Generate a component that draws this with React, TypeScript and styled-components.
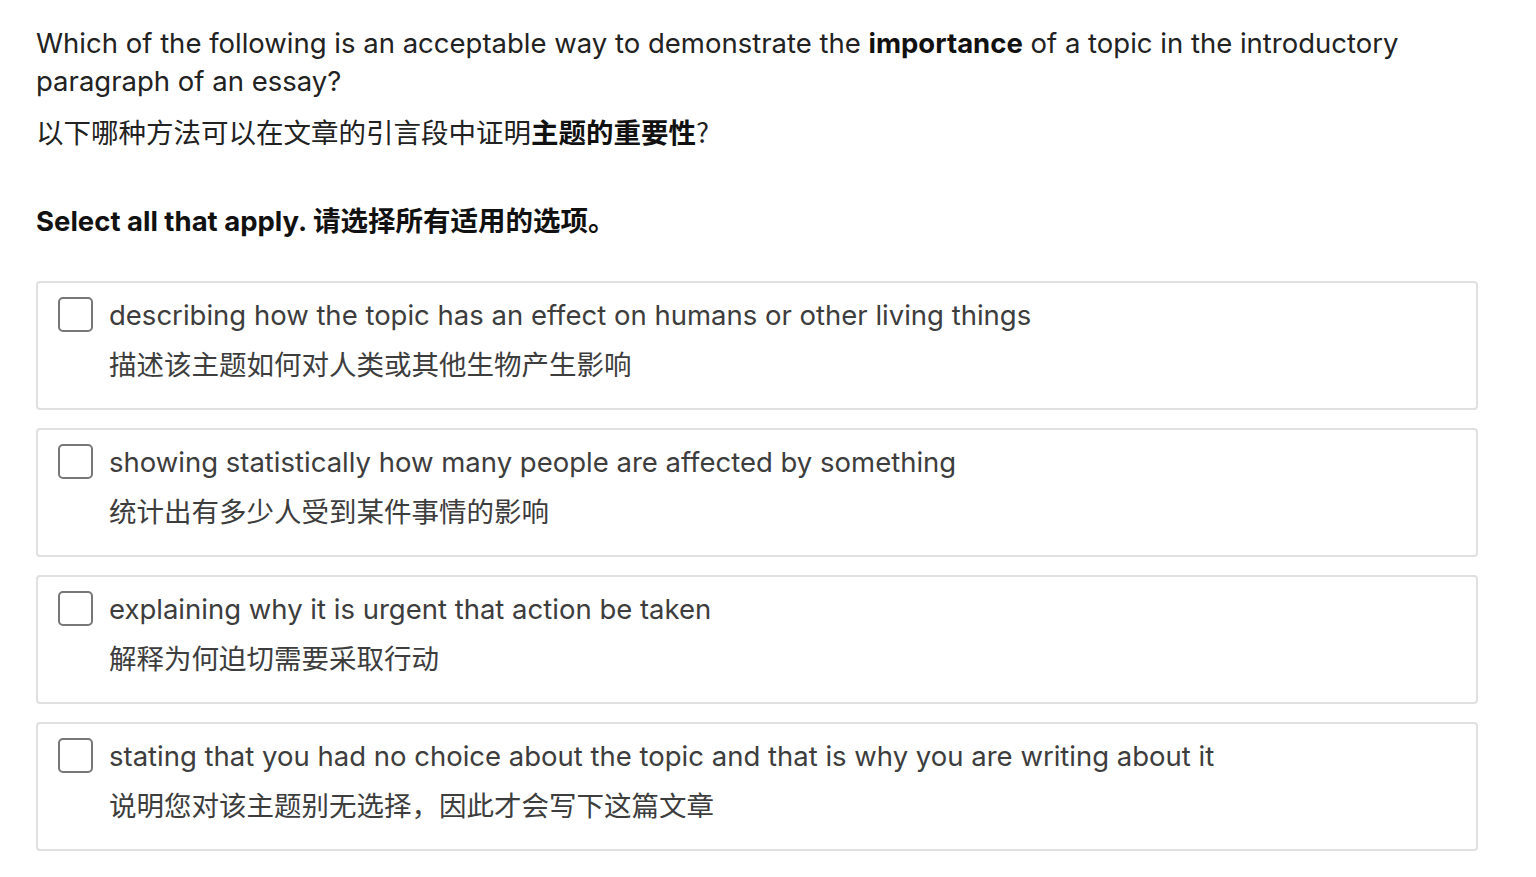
import React from 'react';
import styled, {createGlobalStyle} from 'styled-components';

const GlobalStyle = createGlobalStyle`
    body {
        margin: 0;
        background: #fff;
        font-family: Inter, "Noto Sans CJK SC", sans-serif;
    }
`;

const options = [
    {en: 'describing how the topic has an effect on humans or other living things', zh: '描述该主题如何对人类或其他生物产生影响'},
    {en: 'showing statistically how many people are affected by something', zh: '统计出有多少人受到某件事情的影响'},
    {en: 'explaining why it is urgent that action be taken', zh: '解释为何迫切需要采取行动'},
    {en: 'stating that you had no choice about the topic and that is why you are writing about it', zh: '说明您对该主题别无选择，因此才会写下这篇文章'},
];

const App: React.FC = () => {
    return (
        <Page>
            <GlobalStyle/>
            <Question>
                Which of the following is an acceptable way to demonstrate the <b>importance</b> of a topic in the introductory paragraph of an essay?
            </Question>
            <QuestionZh>以下哪种方法可以在文章的引言段中证明<b>主题的重要性</b>?</QuestionZh>
            <Instruction>Select all that apply. 请选择所有适用的选项。</Instruction>
            <OptionList>
                {options.map((o) => (
                    <OptionCard key={o.en}>
                        <Box/>
                        <OptionText>
                            <OptionEn>{o.en}</OptionEn>
                            <OptionZh>{o.zh}</OptionZh>
                        </OptionText>
                    </OptionCard>
                ))}
            </OptionList>
        </Page>
    );
};

export default App;

const Page = styled.div`
    padding: 24px 58px 20px 36px;
    color: #222;
`;

const Question = styled.p`
    margin: 0;
    font-size: 27.5px;
    line-height: 38px;
    max-width: 1400px;
    b {
        font-weight: 700;
        color: #111;
    }
`;

const QuestionZh = styled.p`
    margin: 12px 0 0;
    font-size: 27.5px;
    line-height: 38px;
    font-family: "Noto Sans CJK SC", Inter, sans-serif;
    b {
        font-weight: 700;
        color: #111;
    }
`;

const Instruction = styled.p`
    margin: 52px 0 0;
    font-size: 27.5px;
    line-height: 38px;
    font-weight: 700;
    color: #111;
`;

const OptionList = styled.div`
    display: flex;
    flex-direction: column;
    gap: 18px;
    margin-top: 41px;
`;

const OptionCard = styled.label`
    display: flex;
    align-items: flex-start;
    gap: 16px;
    border: 2px solid #e0e0e0;
    border-radius: 4px;
    padding: 13px 20px 26px;
    cursor: pointer;
`;

const Box = styled.span`
    flex: none;
    width: 31px;
    height: 31px;
    margin-top: 1px;
    border: 2px solid #777;
    border-radius: 5px;
    background: #fff;
`;

const OptionText = styled.div`
    display: flex;
    flex-direction: column;
    gap: 10px;
    color: #3d3d3d;
`;

const OptionEn = styled.span`
    font-size: 27.5px;
    line-height: 38px;
`;

const OptionZh = styled.span`
    font-size: 27.5px;
    line-height: 38px;
    font-family: "Noto Sans CJK SC", sans-serif;
`;
